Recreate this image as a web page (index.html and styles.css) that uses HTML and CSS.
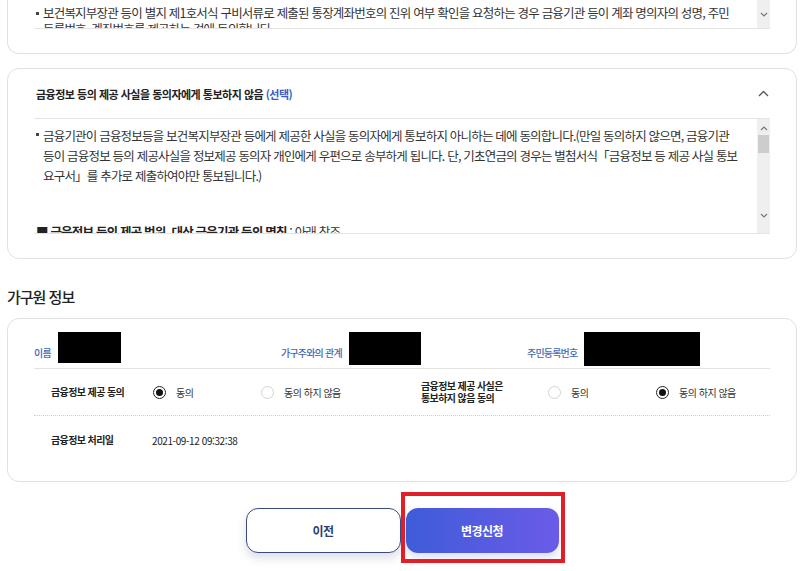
FILE: index.html
```html
<!DOCTYPE html>
<html lang="ko">
<head>
    <meta charset="UTF-8">
    <meta name="viewport" content="width=device-width, initial-scale=1.0">
    <title>가구원 정보 변경신청</title>
    <link rel="stylesheet" href="styles.css">
</head>
<body>
    <div class="page">
        <!-- 앞 약관 (위로 스크롤되어 아랫부분만 보임) -->
        <div class="card card--cut">
            <div class="terms terms--short">
                <div class="terms-text">
                    <p class="bullet">보건복지부장관 등이 별지 제1호서식 구비서류로 제출된 통장계좌번호의 진위 여부 확인을 요청하는 경우 금융기관 등이 계좌 명의자의 성명, 주민<br>등록번호, 계좌번호를 제공하는 것에 동의합니다.</p>
                </div>
                <div class="scrollbar">
                    <span class="sb-arrow"><svg width="8" height="5" viewBox="0 0 8 5"><polyline points="1,1 4,4 7,1" fill="none" stroke="#777" stroke-width="1.2"/></svg></span>
                </div>
            </div>
        </div>

        <!-- 통보하지 않음 동의 -->
        <div class="card consent-card">
            <div class="consent-head">
                <span class="consent-title">금융정보 등의 제공 사실을 동의자에게 통보하지 않음 <em>(선택)</em></span>
                <svg class="chevron" width="11" height="7" viewBox="0 0 11 7"><polyline points="1,6 5.5,1.5 10,6" fill="none" stroke="#555" stroke-width="1.3"/></svg>
            </div>
            <div class="terms terms--tall">
                <div class="terms-text">
                    <p class="bullet">금융기관이 금융정보등을 보건복지부장관 등에게 제공한 사실을 동의자에게 통보하지 아니하는 데에 동의합니다.(만일 동의하지 않으면, 금융기관<br>등이 금융정보 등의 제공사실을 정보제공 동의자 개인에게 우편으로 송부하게 됩니다. 단, 기초연금의 경우는 별첨서식「금융정보 등 제공 사실 통보<br>요구서」를 추가로 제출하여야만 통보됩니다.)</p>
                    <p class="square"><strong>■ 금융정보 등의 제공 범위, 대상 금융기관 등의 명칭</strong> : 아래 참조</p>
                </div>
                <div class="scrollbar">
                    <span class="sb-arrow"><svg width="8" height="5" viewBox="0 0 8 5"><polyline points="1,4 4,1 7,4" fill="none" stroke="#777" stroke-width="1.2"/></svg></span>
                    <span class="sb-thumb"></span>
                    <span class="sb-space"></span>
                    <span class="sb-arrow"><svg width="8" height="5" viewBox="0 0 8 5"><polyline points="1,1 4,4 7,1" fill="none" stroke="#777" stroke-width="1.2"/></svg></span>
                </div>
            </div>
        </div>

        <h2 class="section-title">가구원 정보</h2>

        <div class="card member-card">
            <div class="member-row">
                <div class="field">
                    <span class="field-label">이름</span>
                    <span class="masked masked--name"></span>
                </div>
                <div class="field">
                    <span class="field-label">가구주와의 관계</span>
                    <span class="masked masked--rel"></span>
                </div>
                <div class="field">
                    <span class="field-label">주민등록번호</span>
                    <span class="masked masked--id"></span>
                </div>
            </div>

            <div class="agree-row">
                <span class="agree-label">금융정보 제공 동의</span>
                <label class="option"><span class="radio is-on"></span>동의</label>
                <label class="option"><span class="radio"></span>동의 하지 않음</label>
                <span class="agree-label">금융정보 제공 사실은<br>통보하지 않음 동의</span>
                <label class="option"><span class="radio"></span>동의</label>
                <label class="option"><span class="radio is-on"></span>동의 하지 않음</label>
            </div>

            <div class="date-row">
                <span class="agree-label">금융정보 처리일</span>
                <span class="date">2021-09-12 09:32:38</span>
            </div>
        </div>

        <div class="actions">
            <button class="btn btn-prev">이전</button>
            <button class="btn btn-submit">변경신청<span class="highlight"></span></button>
        </div>
    </div>
</body>
</html>
```

FILE: styles.css
```css
body {
    margin: 0;
    font-family: "Noto Sans CJK KR", "Noto Sans", sans-serif;
    color: #333;
    background-color: #fff;
}
.page {
    padding: 0 10px 30px 7px;
}
.card {
    background-color: #fff;
    border: 1px solid #e1e1e1;
    border-radius: 12px;
}
.card--cut {
    border-top: 0;
    border-radius: 0 0 12px 12px;
    padding: 0 26px 24px;
}

/* 약관 스크롤 박스 */
.terms {
    display: flex;
    border-bottom: 1px solid #e3e3e3;
    overflow: hidden;
}
.terms--short {
    height: 28px;
}
.terms--tall {
    height: 114px;
    border-top: 1px solid #e3e3e3;
}
.terms-text {
    flex: 1;
    overflow: hidden;
    white-space: nowrap;
    font-size: 12.5px;
    letter-spacing: -0.8px;
    color: #333;
}
.terms-text p {
    margin: 0;
}
.terms--short .terms-text {
    padding-top: 5px;
    line-height: 16px;
}
.terms--tall .terms-text {
    padding-top: 7px;
    line-height: 20px;
}
.bullet {
    padding-left: 9px;
    position: relative;
}
.bullet::before {
    content: "";
    position: absolute;
    left: 2px;
    top: 7px;
    width: 3px;
    height: 3px;
    background-color: #444;
}
.square {
    margin-top: 36px !important;
    padding-left: 2px;
}
.square strong {
    font-weight: 700;
    color: #222;
}
.scrollbar {
    width: 13px;
    background-color: #efefef;
    display: flex;
    flex-direction: column;
    align-items: center;
}
.terms--short .scrollbar {
    justify-content: center;
}
.sb-arrow {
    height: 13px;
    display: flex;
    align-items: center;
    justify-content: center;
}
.terms--tall .sb-arrow:first-child {
    margin-top: 3px;
}
.sb-thumb {
    width: 11px;
    height: 18px;
    background-color: #cdcdcd;
}
.sb-space {
    flex: 1;
}
.terms--tall .sb-arrow:last-child {
    margin-bottom: 11px;
}

/* 통보하지 않음 카드 */
.consent-card {
    margin-top: 14px;
    padding: 0 26px 24px;
}
.consent-head {
    height: 49px;
    display: flex;
    align-items: center;
    justify-content: space-between;
    padding-left: 2px;
}
.consent-title {
    font-size: 11px;
    font-weight: 700;
    letter-spacing: -0.5px;
    color: #222;
}
.consent-title em {
    font-style: normal;
    color: #3b5ec6;
}
.chevron {
    margin-right: 1px;
}

/* 가구원 정보 */
.section-title {
    margin: 27px 0 10px;
    font-size: 15px;
    line-height: 22px;
    font-weight: 500;
    letter-spacing: -1px;
    color: #222;
}
.member-card {
    padding: 0 26px 17px;
}
.member-row {
    display: grid;
    grid-template-columns: 247px 246px 1fr;
    height: 50px;
    padding-top: 13px;
    box-sizing: border-box;
    border-bottom: 1px solid #e3e3e3;
}
.field {
    display: flex;
    align-items: flex-start;
}
.field-label {
    margin-top: 13px;
    margin-right: 7px;
    font-size: 10px;
    font-weight: 500;
    letter-spacing: -0.8px;
    color: #4467b4;
}
.masked {
    background-color: #000;
}
.masked--name {
    width: 63px;
    height: 31px;
}
.masked--rel {
    width: 72px;
    height: 33px;
}
.masked--id {
    width: 116px;
    height: 34px;
}
.agree-row {
    display: grid;
    grid-template-columns: 102px 108px 160px 127px 108px 1fr;
    align-items: center;
    height: 46px;
    padding-left: 17px;
    border-bottom: 1px dotted #cfcfcf;
}
.agree-label {
    font-size: 10px;
    font-weight: 700;
    line-height: 12px;
    letter-spacing: -0.6px;
    color: #222;
}
.option {
    display: flex;
    align-items: center;
    font-size: 10px;
    letter-spacing: -0.5px;
    color: #333;
}
.radio {
    width: 13px;
    height: 13px;
    box-sizing: border-box;
    border: 1px solid #d3d3d3;
    border-radius: 50%;
    margin-right: 10px;
    display: flex;
    align-items: center;
    justify-content: center;
}
.radio.is-on {
    border: 1.5px solid #222;
}
.radio.is-on::after {
    content: "";
    width: 7px;
    height: 7px;
    border-radius: 50%;
    background-color: #111;
}
.date-row {
    display: grid;
    grid-template-columns: 101px 1fr;
    align-items: center;
    height: 48px;
    padding-left: 17px;
}
.date {
    font-size: 10px;
    letter-spacing: -0.4px;
    color: #222;
}

/* 버튼 */
.actions {
    display: flex;
    justify-content: center;
    gap: 5px;
    margin-top: 26px;
}
.btn {
    width: 155px;
    height: 45px;
    border-radius: 12px;
    font-family: inherit;
    font-size: 12px;
    font-weight: 700;
    letter-spacing: -0.5px;
    cursor: pointer;
}
.btn-prev {
    background-color: #fff;
    border: 1px solid #3c4b7e;
    color: #2d3d75;
    box-shadow: 0 5px 10px rgba(60, 75, 126, 0.18);
}
.btn-submit {
    width: 153px;
    position: relative;
    border: none;
    color: #fff;
    background: linear-gradient(90deg, #3f5cd8, #6b5be8);
    box-shadow: 0 5px 10px rgba(80, 90, 200, 0.2);
}
.highlight {
    position: absolute;
    top: -16px;
    bottom: -10px;
    left: -5px;
    right: -6px;
    border: 4px solid #e01f26;
}
```
